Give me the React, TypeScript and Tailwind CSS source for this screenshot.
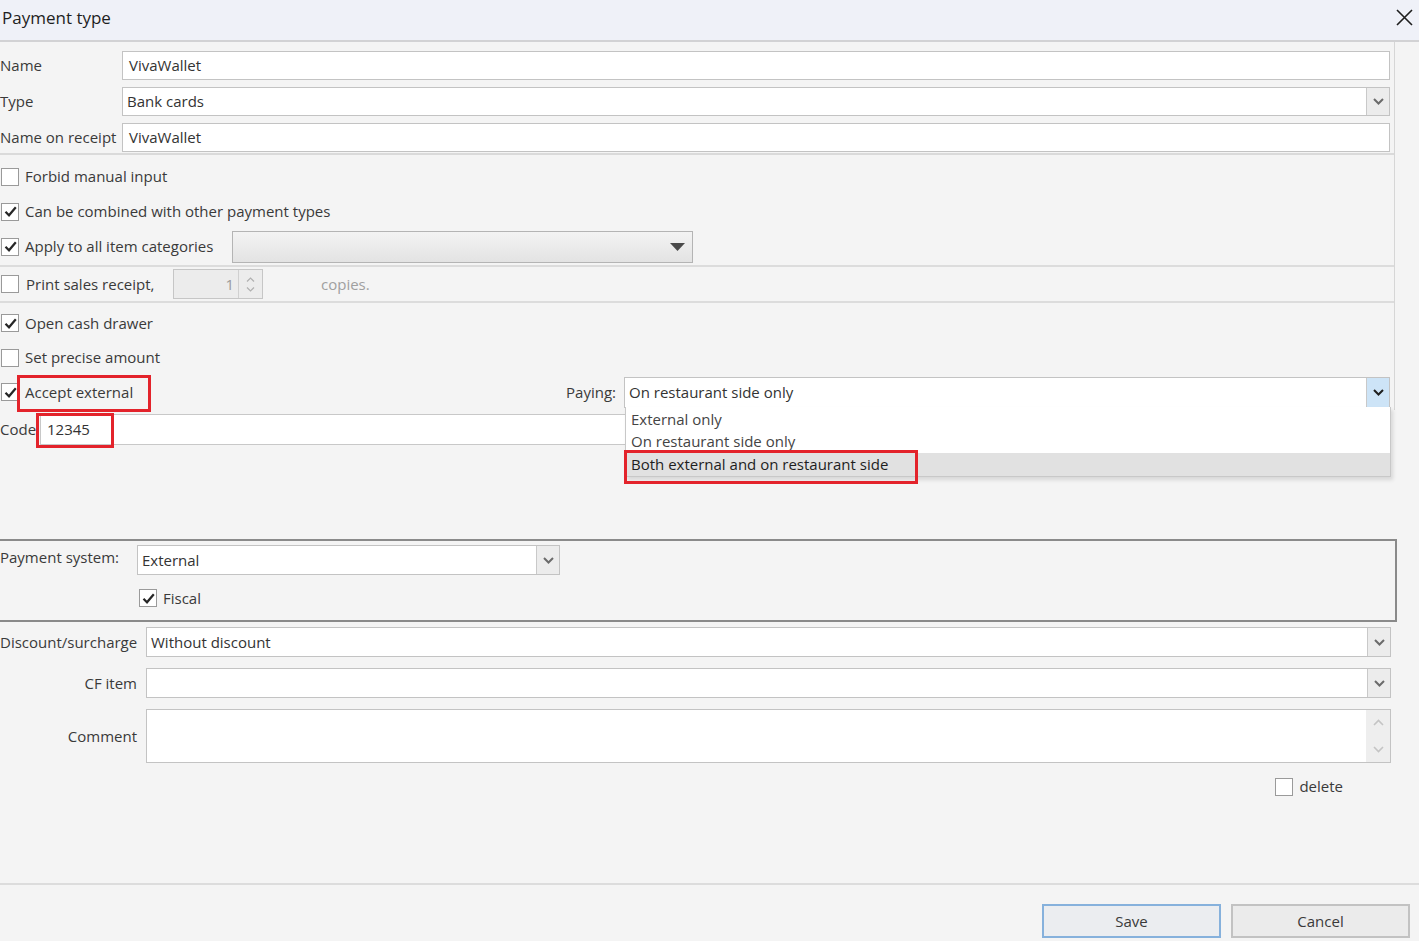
import React from "react";

const Check = () => (
  <svg width="15" height="15" viewBox="0 0 15 15" className="block">
    <path d="M2.5 7.8 L6 11.3 L12.8 3.2" fill="none" stroke="#262626" strokeWidth="2.2" />
  </svg>
);

const CheckBox = ({ checked }: { checked?: boolean }) => (
  <div className="w-[18px] h-[18px] bg-white border border-[#9a9a9a] flex items-center justify-center shrink-0">
    {checked ? <Check /> : null}
  </div>
);

const Chevron = ({ color = "#6b6b6b" }: { color?: string }) => (
  <svg width="11" height="7" viewBox="0 0 11 7" className="block">
    <path d="M1 1 L5.5 5.5 L10 1" fill="none" stroke={color} strokeWidth="2" />
  </svg>
);

const Select = ({
  text,
  className = "",
  arrowClass = "bg-[#ececec]",
  chevColor,
}: {
  text: string;
  className?: string;
  arrowClass?: string;
  chevColor?: string;
}) => (
  <div className={`flex border border-[#c3c3c3] bg-white ${className}`}>
    <div className="flex-1 flex items-center pl-[4px] text-[#333]">{text}</div>
    <div className={`w-[23px] border-l border-[#c9c9c9] flex items-center justify-center ${arrowClass}`}>
      <Chevron color={chevColor} />
    </div>
  </div>
);

const Input = ({ text, className = "" }: { text: string; className?: string }) => (
  <div className={`flex items-center border border-[#c3c3c3] bg-white pl-[6px] text-[#333] ${className}`}>
    {text}
  </div>
);

export default function App() {
  return (
    <div className="relative w-[1419px] h-[941px] overflow-hidden bg-[#f4f4f4] text-[15px] text-[#3a3a3a] font-['Open_Sans','Noto_Sans',sans-serif] leading-none">
      {/* Title bar */}
      <div className="h-[42px] bg-[#eff1f8] border-b-2 border-[#d2d2d4] flex items-center justify-between">
        <div className="pl-[2px] text-[17px] text-[#1e1e1e] -mt-[6px]">Payment type</div>
        <div className="pr-[6px] -mt-[6px]">
          <svg width="17" height="17" viewBox="0 0 17 17" className="block">
            <path d="M1 1 L16 16 M16 1 L1 16" stroke="#1e1e1e" strokeWidth="1.6" />
          </svg>
        </div>
      </div>

      {/* Top panel */}
      <div className="w-[1395px] border-r border-[#d6d6d6]">
        <div className="pt-[9px] flex flex-col gap-[7px] pb-[1px] border-b-2 border-[#dadada]">
          <div className="flex items-center h-[29px]">
            <div className="w-[122px]">Name</div>
            <Input text="VivaWallet" className="flex-1 h-[29px] mr-[4px]" />
          </div>
          <div className="flex items-center h-[29px]">
            <div className="w-[122px]">Type</div>
            <Select text="Bank cards" className="flex-1 h-[29px] mr-[4px]" />
          </div>
          <div className="flex items-center h-[29px]">
            <div className="w-[122px]">Name on receipt</div>
            <Input text="VivaWallet" className="flex-1 h-[29px] mr-[4px]" />
          </div>
        </div>

        <div className="pt-[4px]">
          <div className="flex items-center h-[35px] pl-[1px] gap-[6px]">
            <CheckBox />
            <span>Forbid manual input</span>
          </div>
          <div className="flex items-center h-[35px] pl-[1px] gap-[6px]">
            <CheckBox checked />
            <span>Can be combined with other payment types</span>
          </div>
          <div className="flex items-center h-[35px] pl-[1px] gap-[6px]">
            <CheckBox checked />
            <span className="w-[201px]">Apply to all item categories</span>
            <div className="w-[461px] h-[32px] border border-[#b4b4b4] bg-gradient-to-b from-[#f3f3f3] to-[#e3e3e3] flex items-center justify-end pr-[7px]">
              <svg width="15" height="8" viewBox="0 0 15 8" className="block">
                <path d="M0 0 L15 0 L7.5 8 Z" fill="#4a4a4a" />
              </svg>
            </div>
          </div>
        </div>

        <div className="mt-[1px] h-[38px] border-y-2 border-[#dcdcdc] flex items-center pl-[1px]">
          <CheckBox />
          <span className="ml-[7px] w-[147px]">Print sales receipt,</span>
          <div className="w-[90px] h-[30px] flex border border-[#c6c6c6] bg-[#ececec]">
            <div className="flex-1 flex items-center justify-end pr-[4px] text-[#9a9a9a]">1</div>
            <div className="w-[24px] border-l border-[#d0d0d0] flex flex-col items-center justify-center gap-[5px]">
              <svg width="9" height="5" viewBox="0 0 9 5" className="block"><path d="M1 4.5 L4.5 1 L8 4.5" fill="none" stroke="#b0b0b0" strokeWidth="1.2" /></svg>
              <svg width="9" height="5" viewBox="0 0 9 5" className="block"><path d="M1 0.5 L4.5 4 L8 0.5" fill="none" stroke="#b0b0b0" strokeWidth="1.2" /></svg>
            </div>
          </div>
          <span className="ml-[58px] text-[#a0a0a0]">copies.</span>
        </div>

        <div className="flex items-center mt-[2px] h-[36px] pl-[1px] gap-[6px]">
          <CheckBox checked />
          <span>Open cash drawer</span>
        </div>
        <div className="flex items-center h-[33px] pl-[1px] gap-[6px]">
          <CheckBox />
          <span>Set precise amount</span>
        </div>
        <div className="flex items-center h-[36px] pl-[1px]">
          <CheckBox checked />
          <span className="ml-[6px]">Accept external</span>
          <span className="ml-auto mr-[8px]">Paying:</span>
          <Select
            text="On restaurant side only"
            className="w-[766px] h-[31px] mr-[4px] border-[#b8b8b8]"
            arrowClass="bg-[#cde4f7] border-[#9cc3e6]"
            chevColor="#1f1f1f"
          />
        </div>
      </div>

      {/* Code row */}
      <div className="flex items-center mt-[4px] h-[31px]">
        <span className="w-[40px]">Code</span>
        <Input text="12345" className="flex-1 h-[31px] mr-[28px] border-[#c8c8c8]" />
      </div>

      {/* Payment system group */}
      <div className="mt-[94px] w-[1397px] h-[83px] border-2 border-l-0 border-[#8a8a8a] pt-[4px]">
        <div className="flex items-start">
          <span className="w-[137px] mt-[5px]">Payment system:</span>
          <Select text="External" className="w-[423px] h-[30px]" />
        </div>
        <div className="flex items-center gap-[6px] ml-[139px] mt-[14px]">
          <CheckBox checked />
          <span>Fiscal</span>
        </div>
      </div>

      <div className="flex items-center mt-[5px] h-[30px]">
        <span className="w-[146px]">Discount/surcharge</span>
        <Select text="Without discount" className="flex-1 h-[30px] mr-[28px]" />
      </div>
      <div className="flex items-center mt-[11px] h-[30px]">
        <span className="w-[137px] text-right">CF item</span>
        <Select text="" className="flex-1 h-[30px] ml-[9px] mr-[28px]" />
      </div>
      <div className="flex items-center mt-[11px] h-[54px]">
        <span className="w-[137px] text-right">Comment</span>
        <div className="flex-1 h-[54px] ml-[9px] mr-[28px] flex border border-[#c3c3c3] bg-white">
          <div className="flex-1" />
          <div className="w-[24px] bg-[#eeeeee] flex flex-col items-center justify-between py-[9px]">
            <svg width="11" height="7" viewBox="0 0 11 7" className="block"><path d="M1 6 L5.5 1.5 L10 6" fill="none" stroke="#c4c4c4" strokeWidth="1.6" /></svg>
            <svg width="11" height="7" viewBox="0 0 11 7" className="block"><path d="M1 1 L5.5 5.5 L10 1" fill="none" stroke="#c4c4c4" strokeWidth="1.6" /></svg>
          </div>
        </div>
      </div>
      <div className="flex items-center justify-end mt-[14px] h-[19px] pr-[76px] gap-[6px]">
        <CheckBox />
        <span>delete</span>
      </div>

      {/* Footer */}
      <div className="mt-[87px] border-t-2 border-[#dcdcdc] h-[58px] flex items-start justify-end pt-[19px] pr-[9px] gap-[10px]">
        <div className="w-[179px] h-[34px] border-2 border-[#86b1dc] bg-[#ebedf0] flex items-center justify-center text-[#3a3a3a]">Save</div>
        <div className="w-[179px] h-[34px] border-2 border-[#c2c2c2] bg-[#ebebeb] flex items-center justify-center text-[#3a3a3a]">Cancel</div>
      </div>

      {/* Open dropdown list overlay */}
      <div className="absolute left-[625px] top-[407px] w-[766px] h-[70px] bg-white border border-[#c8c8c8] border-t-0 shadow-[2px_3px_4px_rgba(0,0,0,0.12)] flex flex-col">
        <div className="h-[23px] flex items-center pl-[5px] pt-[1px] text-[#444]">External only</div>
        <div className="h-[23px] flex items-center pl-[5px] text-[#444]">On restaurant side only</div>
        <div className="flex-1 flex items-center pl-[5px] bg-[#e1e1e1] text-[#1e1e1e]">Both external and on restaurant side</div>
      </div>

      {/* Red annotation boxes */}
      <div className="absolute left-[17px] top-[375px] w-[134px] h-[37px] border-[3px] border-[#e3232b]" />
      <div className="absolute left-[36px] top-[413px] w-[78px] h-[35px] border-[3px] border-[#e3232b]" />
      <div className="absolute left-[624px] top-[450px] w-[294px] h-[34px] border-[3px] border-[#e3232b]" />
    </div>
  );
}
